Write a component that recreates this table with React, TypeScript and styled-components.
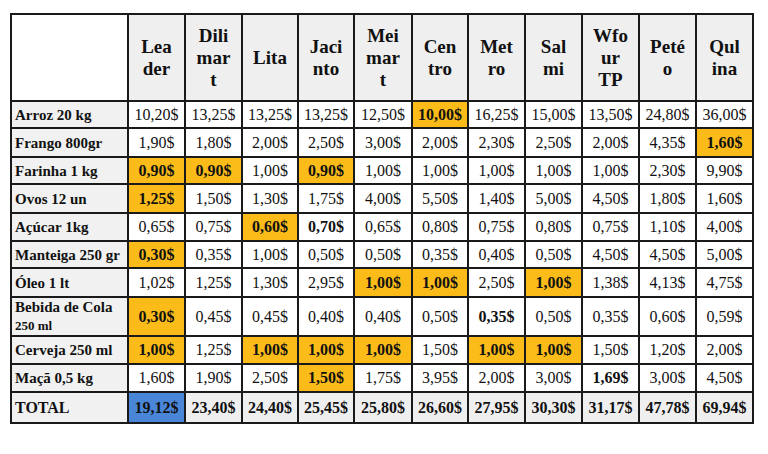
import React from "react";
import styled, { createGlobalStyle, css } from "styled-components";

const Global = createGlobalStyle`
  html, body { margin: 0; padding: 0; background: #ffffff; }
  body { font-family: "Liberation Serif", "Times New Roman", serif; color: #111; }
`;

const Page = styled.div`
  width: 768px;
  height: 454px;
  padding: 13px 0 0 10px;
  box-sizing: border-box;
  background: #fff;
`;

const Table = styled.table`
  border-collapse: separate;
  border-spacing: 0;
  table-layout: fixed;
  width: 742px;
  border-left: 2px solid #1a1a1a;
  border-top: 2px solid #1a1a1a;
  font-family: "Liberation Serif", "Times New Roman", serif;
`;

const Col = styled.col<{ $w: number }>`
  width: ${(p) => p.$w}px;
`;

const cellBase = css`
  border-right: 2px solid #1a1a1a;
  border-bottom: 2px solid #1a1a1a;
  padding: 0;
  box-sizing: border-box;
  vertical-align: middle;
  color: #111;
  font-family: "Liberation Serif", "Times New Roman", serif;
`;

const HeadRow = styled.tr`
  height: 87px;
`;

const BodyRow = styled.tr<{ $h: number }>`
  height: ${(p) => p.$h}px;
`;

const Corner = styled.th`
  ${cellBase}
  background: #ffffff;
`;

const HeadCell = styled.th`
  ${cellBase}
  background: #efefef;
  font-size: 19px;
  line-height: 22px;
  font-weight: 700;
  text-align: center;
`;

const Label = styled.th<{ $total?: boolean }>`
  ${cellBase}
  background: #f1f1f1;
  font-size: 15px;
  line-height: 18px;
  font-weight: 700;
  text-align: left;
  padding-left: 3px;
  ${(p) => p.$total && css`font-size: 16px;`}
`;

const SubLine = styled.span`
  font-size: 13px;
`;

const Cell = styled.td<{ $hl?: "o" | "b"; $bold?: boolean; $total?: boolean }>`
  ${cellBase}
  background: ${(p) => (p.$hl === "o" ? "#fbbc1a" : p.$hl === "b" ? "#4a86d8" : p.$total ? "#efefef" : "#ffffff")};
  font-size: 16px;
  font-weight: ${(p) => (p.$bold || p.$hl || p.$total ? 700 : 400)};
  text-align: center;
  white-space: nowrap;
`;

const widths = [117, 57, 57, 56, 56, 58, 56, 57, 57, 57, 57, 57];

const headers: string[][] = [
  ["Lea", "der"],
  ["Dili", "mar", "t"],
  ["Lita"],
  ["Jaci", "nto"],
  ["Mei", "mar", "t"],
  ["Cen", "tro"],
  ["Met", "ro"],
  ["Sal", "mi"],
  ["Wfo", "ur", "TP"],
  ["Peté", "o"],
  ["Qul", "ina"],
];

// "*" prefix = orange highlight, "!" prefix = bold only, "#" = blue
type Row = { label: string; sub?: string; h: number; values: string[]; total?: boolean };

const rows: Row[] = [
  { label: "Arroz 20 kg", h: 27, values: ["10,20$", "13,25$", "13,25$", "13,25$", "12,50$", "*10,00$", "16,25$", "15,00$", "13,50$", "24,80$", "36,00$"] },
  { label: "Frango 800gr", h: 29, values: ["1,90$", "1,80$", "2,00$", "2,50$", "3,00$", "2,00$", "2,30$", "2,50$", "2,00$", "4,35$", "*1,60$"] },
  { label: "Farinha 1 kg", h: 27, values: ["*0,90$", "*0,90$", "1,00$", "*0,90$", "1,00$", "1,00$", "1,00$", "1,00$", "1,00$", "2,30$", "9,90$"] },
  { label: "Ovos 12 un", h: 29, values: ["*1,25$", "1,50$", "1,30$", "1,75$", "4,00$", "5,50$", "1,40$", "5,00$", "4,50$", "1,80$", "1,60$"] },
  { label: "Açúcar 1kg", h: 28, values: ["0,65$", "0,75$", "*0,60$", "!0,70$", "0,65$", "0,80$", "0,75$", "0,80$", "0,75$", "1,10$", "4,00$"] },
  { label: "Manteiga 250 gr", h: 27, values: ["*0,30$", "0,35$", "1,00$", "0,50$", "0,50$", "0,35$", "0,40$", "0,50$", "4,50$", "4,50$", "5,00$"] },
  { label: "Óleo 1 lt", h: 29, values: ["1,02$", "1,25$", "1,30$", "2,95$", "*1,00$", "*1,00$", "2,50$", "*1,00$", "1,38$", "4,13$", "4,75$"] },
  { label: "Bebida de Cola", sub: "250 ml", h: 39, values: ["*0,30$", "0,45$", "0,45$", "0,40$", "0,40$", "0,50$", "!0,35$", "0,50$", "0,35$", "0,60$", "0,59$"] },
  { label: "Cerveja 250 ml", h: 28, values: ["*1,00$", "1,25$", "*1,00$", "*1,00$", "*1,00$", "1,50$", "*1,00$", "*1,00$", "1,50$", "1,20$", "2,00$"] },
  { label: "Maçã 0,5 kg", h: 28, values: ["1,60$", "1,90$", "2,50$", "*1,50$", "1,75$", "3,95$", "2,00$", "3,00$", "!1,69$", "3,00$", "4,50$"] },
  { label: "TOTAL", h: 31, total: true, values: ["#19,12$", "23,40$", "24,40$", "25,45$", "25,80$", "26,60$", "27,95$", "30,30$", "31,17$", "47,78$", "69,94$"] },
];

function renderValue(v: string, total: boolean | undefined, key: number) {
  const mark = v[0];
  if (mark === "*") return <Cell key={key} $hl="o">{v.slice(1)}</Cell>;
  if (mark === "#") return <Cell key={key} $hl="b">{v.slice(1)}</Cell>;
  if (mark === "!") return <Cell key={key} $bold>{v.slice(1)}</Cell>;
  return <Cell key={key} $total={total}>{v}</Cell>;
}

export default function App() {
  return (
    <>
      <Global />
      <Page>
        <Table>
          <colgroup>
            {widths.map((w, i) => (
              <Col key={i} $w={w} />
            ))}
          </colgroup>
          <thead>
            <HeadRow>
              <Corner />
              {headers.map((parts, i) => (
                <HeadCell key={i}>
                  {parts.map((p, j) => (
                    <React.Fragment key={j}>
                      {j > 0 && <br />}
                      {p}
                    </React.Fragment>
                  ))}
                </HeadCell>
              ))}
            </HeadRow>
          </thead>
          <tbody>
            {rows.map((r, i) => (
              <BodyRow key={i} $h={r.h}>
                <Label $total={r.total}>
                  {r.label}
                  {r.sub && (
                    <>
                      <br />
                      <SubLine>{r.sub}</SubLine>
                    </>
                  )}
                </Label>
                {r.values.map((v, j) => renderValue(v, r.total, j))}
              </BodyRow>
            ))}
          </tbody>
        </Table>
      </Page>
    </>
  );
}
